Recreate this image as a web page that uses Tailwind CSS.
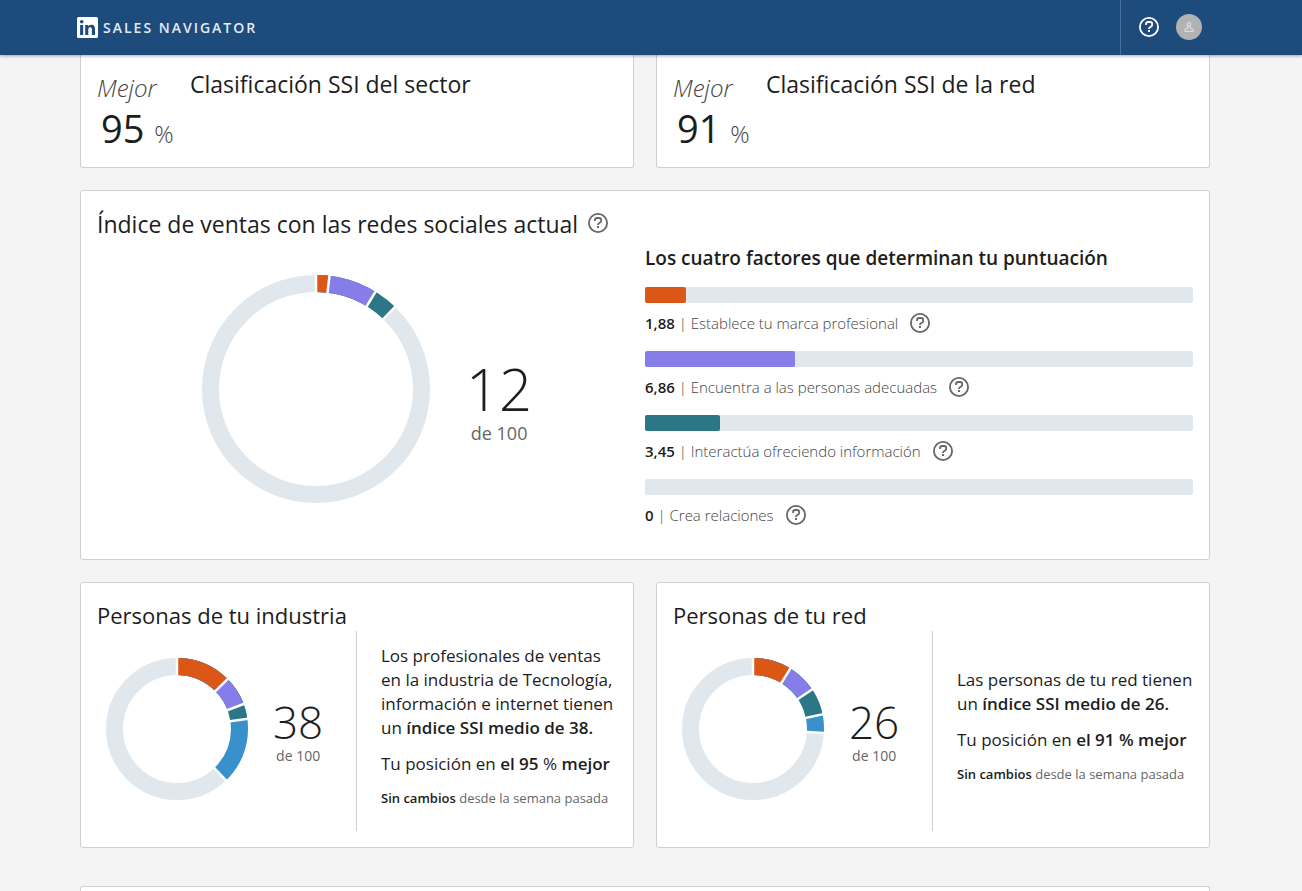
<!DOCTYPE html>
<html lang="es">
<head>
<meta charset="utf-8">
<meta name="viewport" content="width=device-width, initial-scale=1">
<title>Sales Navigator - SSI</title>
<script src="https://cdn.jsdelivr.net/npm/@tailwindcss/browser@4"></script>
</head>
<body class="bg-[#f4f4f4] font-['Open_Sans','Noto_Sans',sans-serif] text-[#1d1d1d]">
<svg class="hidden" aria-hidden="true">
  <symbol id="help" viewBox="0 0 24 24">
    <circle cx="12" cy="12" r="9.1" fill="none" stroke="currentColor" stroke-width="1.8"/>
    <path d="M9 10V9.3A2.3 2.3 0 0 1 11.3 7H13a2.2 2.2 0 0 1 2.2 2.2v.5c0 .8-.4 1.4-1.1 1.8l-1.1.7c-.6.3-1 .9-1 1.6v.2" fill="none" stroke="currentColor" stroke-width="1.8"/>
    <path d="M11 15h2v2h-2z" fill="currentColor"/>
  </symbol>
</svg>

<header class="sticky top-0 z-10 h-[55px] bg-[#1c4b7c] pr-3 text-white shadow-[0_1px_3px_rgba(0,0,0,0.35)]">
  <div class="mx-auto flex h-full max-w-[1136px] justify-between">
    <a href="#" class="flex items-center gap-[5px]">
      <svg class="size-[21px]" viewBox="0 0 21 21" aria-label="LinkedIn">
        <rect width="21" height="21" rx="1.6" fill="#fff"/>
        <g fill="#1c4b7c"><circle cx="4.7" cy="4.8" r="1.8"/><path d="M3.1 8h3.1v10H3.1zM8.2 8h3v1.4c.5-.9 1.5-1.7 3.1-1.7 3 0 3.7 2 3.7 4.6V18h-3.1v-5c0-1.200-.1-2.700-1.700-2.700s-1.900 1.300-1.900 2.600V18H8.200z"/></g>
      </svg>
      <span class="text-sm font-semibold tracking-[2px] text-[#e4eaf1]">SALES NAVIGATOR</span>
    </a>
    <div class="flex items-center gap-[15px] border-l border-[#49709a] pr-[11px] pb-px pl-4">
      <button type="button" aria-label="Ayuda"><svg class="block size-6"><use href="#help"/></svg></button>
      <button type="button" aria-label="Cuenta" class="flex size-[26px] items-center justify-center rounded-full bg-[#b0b2b4]">
        <svg class="size-3" viewBox="0 0 12 12" fill="none" stroke="#dadcde" stroke-width="1.2"><path d="M6 1.600a1.700 1.700 0 0 1 1.700 1.700C7.700 4.400 7 5.300 6 5.300S4.300 4.400 4.300 3.300A1.700 1.700 0 0 1 6 1.600z"/><path d="M4.800 5.200v1.600L2.100 8.400V10.300H9.900V8.400L7.200 6.800V5.200"/></svg>
      </button>
    </div>
  </div>
</header>

<main class="pr-3">
  <div class="mx-auto grid max-w-[1130px] grid-cols-2 gap-[22px]">
    <section class="flex h-[113px] gap-8 rounded-b-[3px] border border-t-0 border-[#cfcfcf] bg-white px-4 pt-[15px]">
      <div class="w-[61px] shrink-0 whitespace-nowrap">
        <p class="text-2xl leading-9 font-light text-[#444] italic">Mejor</p>
        <p class="pl-1 text-[38px] leading-11">95 <span class="text-2xl font-light text-[#444]">%</span></p>
      </div>
      <h2 class="text-[23px] leading-7">Clasificación SSI del sector</h2>
    </section>
    <section class="flex h-[113px] gap-8 rounded-b-[3px] border border-t-0 border-[#cfcfcf] bg-white px-4 pt-[15px]">
      <div class="w-[61px] shrink-0 whitespace-nowrap">
        <p class="text-2xl leading-9 font-light text-[#444] italic">Mejor</p>
        <p class="pl-1 text-[38px] leading-11">91 <span class="text-2xl font-light text-[#444]">%</span></p>
      </div>
      <h2 class="text-[23px] leading-7">Clasificación SSI de la red</h2>
    </section>

    <section class="col-span-2 h-[370px] rounded-[3px] border border-[#cfcfcf] bg-white p-4">
      <div class="flex items-start gap-2">
        <h2 class="text-[23px] leading-[34px]">Índice de ventas con las redes sociales actual</h2>
        <button type="button" aria-label="Más información" class="pt-1 text-[#666]"><svg class="block size-6"><use href="#help"/></svg></button>
      </div>
      <div class="grid grid-cols-2">
        <div class="flex gap-9 pt-[34px] pl-[105px]">
          <svg class="size-[228px] shrink-0" viewBox="-114 -114 228 228" fill="none" stroke-width="17" role="img" aria-label="12 de 100">
            <g transform="rotate(-90)">
              <circle r="105.500" stroke="#e0e7ed"/>
              <circle r="105.500" pathLength="100" stroke="#2b7786" stroke-dasharray="12.190 100"/>
              <circle r="105.500" pathLength="100" stroke="#867de8" stroke-dasharray="8.740 100"/>
              <circle r="105.500" pathLength="100" stroke="#da5715" stroke-dasharray="1.880 100"/>
              <g stroke="#fff" stroke-width="2.500"><path d="M90 0h30"/><path d="M90 0h30" transform="rotate(6.800)"/><path d="M90 0h30" transform="rotate(31.500)"/><path d="M90 0h30" transform="rotate(43.900)"/></g>
            </g>
          </svg>
          <div class="pt-[82px] text-center">
            <p class="text-[58px] leading-[64px] font-light">12</p>
            <p class="text-lg leading-6 text-[#666]">de 100</p>
          </div>
        </div>
        <div>
          <h3 class="pb-3 text-[19px] leading-[34px] font-semibold">Los cuatro factores que determinan tu puntuación</h3>
          <ul>
            <li class="h-16">
              <div class="h-4 rounded-[2px] bg-[#e0e7ed]"><div class="h-4 rounded-[2px] bg-[#da5715]" style="width:7.520%"></div></div>
              <div class="flex items-center gap-[10px] pt-2 text-[15px] leading-6 font-light text-[#444]"><p><b class="font-semibold text-[#1d1d1d]">1,88</b> | Establece tu marca profesional</p><button type="button" aria-label="Más información" class="text-[#666]"><svg class="block size-6"><use href="#help"/></svg></button></div>
            </li>
            <li class="h-16">
              <div class="h-4 rounded-[2px] bg-[#e0e7ed]"><div class="h-4 rounded-[2px] bg-[#867de8]" style="width:27.440%"></div></div>
              <div class="flex items-center gap-[10px] pt-2 text-[15px] leading-6 font-light text-[#444]"><p><b class="font-semibold text-[#1d1d1d]">6,86</b> | Encuentra a las personas adecuadas</p><button type="button" aria-label="Más información" class="text-[#666]"><svg class="block size-6"><use href="#help"/></svg></button></div>
            </li>
            <li class="h-16">
              <div class="h-4 rounded-[2px] bg-[#e0e7ed]"><div class="h-4 rounded-[2px] bg-[#2b7786]" style="width:13.700%"></div></div>
              <div class="flex items-center gap-[10px] pt-2 text-[15px] leading-6 font-light text-[#444]"><p><b class="font-semibold text-[#1d1d1d]">3,45</b> | Interactúa ofreciendo información</p><button type="button" aria-label="Más información" class="text-[#666]"><svg class="block size-6"><use href="#help"/></svg></button></div>
            </li>
            <li class="h-16">
              <div class="h-4 rounded-[2px] bg-[#e0e7ed]"></div>
              <div class="flex items-center gap-[10px] pt-2 text-[15px] leading-6 font-light text-[#444]"><p><b class="font-semibold text-[#1d1d1d]">0</b> | Crea relaciones</p><button type="button" aria-label="Más información" class="text-[#666]"><svg class="block size-6"><use href="#help"/></svg></button></div>
            </li>
          </ul>
        </div>
      </div>
    </section>

    <section class="rounded-[3px] border border-[#cfcfcf] bg-white p-4">
      <h2 class="text-[22px] leading-8">Personas de tu industria</h2>
      <div class="flex h-[200px]">
        <div class="flex w-[260px] shrink-0 gap-[25px] border-r border-[#cfcfcf] pt-[27px] pl-[9px]">
          <svg class="size-[142px] shrink-0" viewBox="-71 -71 142 142" fill="none" stroke-width="17" role="img" aria-label="38 de 100">
            <g transform="rotate(-90)">
              <circle r="62.500" stroke="#e0e7ed"/>
              <circle r="62.500" pathLength="100" stroke="#3891cb" stroke-dasharray="37.900 100"/>
              <circle r="62.500" pathLength="100" stroke="#2b7786" stroke-dasharray="22.700 100"/>
              <circle r="62.500" pathLength="100" stroke="#867de8" stroke-dasharray="19.300 100"/>
              <circle r="62.500" pathLength="100" stroke="#da5715" stroke-dasharray="12.600 100"/>
              <g stroke="#fff" stroke-width="2.500"><path d="M50 0h30"/><path d="M50 0h30" transform="rotate(45.400)"/><path d="M50 0h30" transform="rotate(69.500)"/><path d="M50 0h30" transform="rotate(81.700)"/><path d="M50 0h30" transform="rotate(136.400)"/></g>
            </g>
          </svg>
          <div class="pt-10 text-center">
            <p class="text-[44px] leading-[48px] font-light">38</p>
            <p class="text-sm leading-5 text-[#666]">de 100</p>
          </div>
        </div>
        <div class="flex grow flex-col justify-center gap-3 pb-[10px] pl-6 whitespace-nowrap">
          <p class="text-[17px] leading-6">Los profesionales de ventas<br>en la industria de Tecnología,<br>información e internet tienen<br>un <b class="font-semibold">índice SSI medio de 38.</b></p>
          <p class="text-[17px] leading-6">Tu posición en <b class="font-semibold">el 95</b> % <b class="font-semibold">mejor</b></p>
          <p class="text-[13px] leading-5 text-[#666]"><b class="font-semibold text-[#1d1d1d]">Sin cambios</b> desde la semana pasada</p>
        </div>
      </div>
    </section>
    <section class="rounded-[3px] border border-[#cfcfcf] bg-white p-4">
      <h2 class="text-[22px] leading-8">Personas de tu red</h2>
      <div class="flex h-[200px]">
        <div class="flex w-[260px] shrink-0 gap-[25px] border-r border-[#cfcfcf] pt-[27px] pl-[9px]">
          <svg class="size-[142px] shrink-0" viewBox="-71 -71 142 142" fill="none" stroke-width="17" role="img" aria-label="26 de 100">
            <g transform="rotate(-90)">
              <circle r="62.500" stroke="#e0e7ed"/>
              <circle r="62.500" pathLength="100" stroke="#3891cb" stroke-dasharray="25.900 100"/>
              <circle r="62.500" pathLength="100" stroke="#2b7786" stroke-dasharray="21.700 100"/>
              <circle r="62.500" pathLength="100" stroke="#867de8" stroke-dasharray="15.600 100"/>
              <circle r="62.500" pathLength="100" stroke="#da5715" stroke-dasharray="8.800 100"/>
              <g stroke="#fff" stroke-width="2.500"><path d="M50 0h30"/><path d="M50 0h30" transform="rotate(31.700)"/><path d="M50 0h30" transform="rotate(56.200)"/><path d="M50 0h30" transform="rotate(78.100)"/><path d="M50 0h30" transform="rotate(93.200)"/></g>
            </g>
          </svg>
          <div class="pt-10 text-center">
            <p class="text-[44px] leading-[48px] font-light">26</p>
            <p class="text-sm leading-5 text-[#666]">de 100</p>
          </div>
        </div>
        <div class="flex grow flex-col justify-center gap-3 pb-[10px] pl-6 whitespace-nowrap">
          <p class="text-[17px] leading-6">Las personas de tu red tienen<br>un <b class="font-semibold">índice SSI medio de 26.</b></p>
          <p class="text-[17px] leading-6">Tu posición en <b class="font-semibold">el 91 % mejor</b></p>
          <p class="text-[13px] leading-5 text-[#666]"><b class="font-semibold text-[#1d1d1d]">Sin cambios</b> desde la semana pasada</p>
        </div>
      </div>
    </section>
    <section class="col-span-2 mt-4 h-[5px] rounded-t-[3px] border border-b-0 border-[#cfcfcf] bg-white"></section>
  </div>
</main>
</body>
</html>
